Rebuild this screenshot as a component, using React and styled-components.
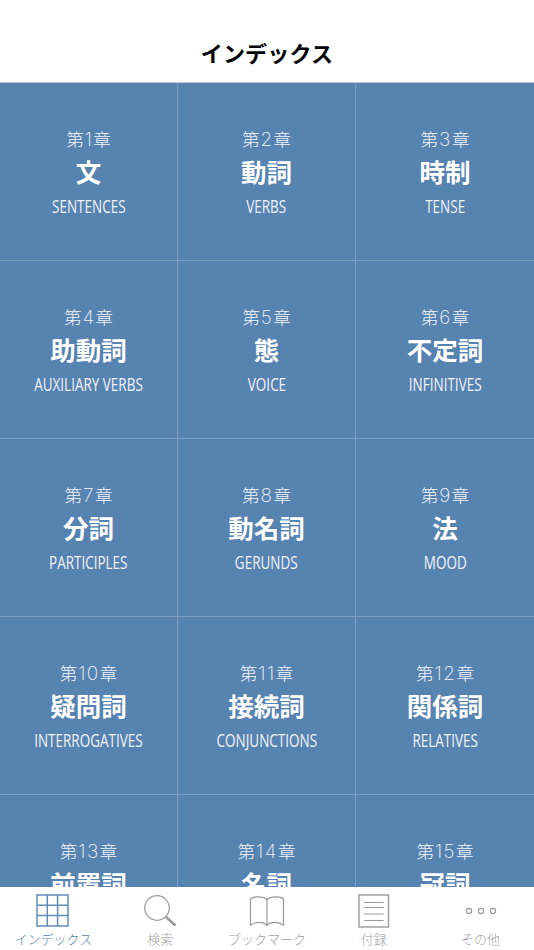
import React from "react";
import styled, { createGlobalStyle } from "styled-components";

const Global = createGlobalStyle`
  html, body { margin: 0; padding: 0; background: #fff; }
  * { box-sizing: border-box; }
`;
const JP = `"Noto Sans CJK JP", "Noto Sans", sans-serif`;

const Page = styled.div`
  width: 534px; height: 950px; display: flex; flex-direction: column; overflow: hidden;
  font-family: ${JP}; background: #fff;
`;
const Header = styled.header`
  height: 83px; flex: none; display: flex; align-items: flex-end; justify-content: center;
  padding-bottom: 15px; border-bottom: 1px solid #c4c8cc;
`;
const Title = styled.h1`
  margin: 0; font-size: 22px; line-height: 30px; font-weight: 700; color: #000; letter-spacing: 0.2px;
`;
const Grid = styled.main`
  flex: 1; min-height: 0; overflow: hidden; display: grid; grid-template-columns: repeat(3, 178px);
  grid-auto-rows: 178px; background: #5783b1;
`;
const Cell = styled.div`
  display: flex; flex-direction: column; align-items: center; padding-top: 44px; color: #fff;
  border-right: ${p => (p.$last ? "none" : "1px solid #7b9dc1")};
  border-bottom: 1px solid #7b9dc1;
`;
const Chapter = styled.div`
  display: flex; align-items: baseline; font-size: 17.5px; line-height: 24px; font-weight: 300; color: #f0f4f8; white-space: nowrap;
`;
const Digits = styled.span`
  font-family: "Inter", sans-serif; font-weight: 200; font-size: 19px; letter-spacing: 1.5px; padding-left: 1px;
`;
const Name = styled.div`
  margin-top: 2px; font-size: 25.5px; line-height: 34px; font-weight: 700; white-space: nowrap;
`;
const English = styled.div`
  margin-top: 6px; font-family: "Open Sans", sans-serif; font-weight: 400; font-size: 19px; line-height: 24px;
  color: #f0f4f8; white-space: nowrap; transform: scaleX(0.71); transform-origin: center;
`;
const TabBar = styled.nav`
  height: 63px; flex: none; display: grid; grid-template-columns: repeat(5, 1fr); background: #fff;
`;
const Tab = styled.div`
  display: flex; flex-direction: column; align-items: center; color: ${p => (p.$active ? "#5783b1" : "#a3a3a3")};
`;
const IconBox = styled.div`
  height: 44px; display: flex; align-items: center; justify-content: center; padding-top: 4px;
`;
const TabLabel = styled.span`
  font-size: 13px; line-height: 16px; white-space: nowrap; font-weight: 300;
`;

const GridIcon = () => (
  <svg width="34" height="34" viewBox="0 0 34 34" fill="none" stroke="#5f8cba" strokeWidth="1.5">
    <rect x="1" y="1" width="31" height="31" />
    <path d="M11.3 1v31M21.6 1v31M1 11.3h31M1 21.6h31" />
  </svg>
);
const SearchIcon = () => (
  <svg width="34" height="34" viewBox="0 0 34 34" fill="none" stroke="#999">
    <circle cx="14" cy="14" r="12.3" strokeWidth="1.2" />
    <path d="M23 23l9.5 8.5" strokeWidth="2.6" />
  </svg>
);
const BookIcon = () => (
  <svg width="36" height="32" viewBox="0 0 36 32" fill="none" stroke="#999" strokeWidth="1.2">
    <path d="M18 5C16 1.5 5 0.5 1.5 4V30C6 27 14 26 18 30.5C22 26 30 27 34.5 30V4C31 0.5 20 1.5 18 5ZM18 5V30.5" />
  </svg>
);
const ListIcon = () => (
  <svg width="32" height="34" viewBox="0 0 32 34" fill="none" stroke="#999">
    <rect x="1" y="1" width="29.5" height="32" strokeWidth="1.4" />
    <path d="M6 8.5h19.5M6 13.5h19.5M6 20h19.5M6 26.5h19.5" strokeWidth="1" />
  </svg>
);
const MoreIcon = () => (
  <svg width="32" height="34" viewBox="0 0 32 34" fill="none" stroke="#999" strokeWidth="1.2">
    <circle cx="4" cy="17" r="2.6" />
    <circle cx="16" cy="17" r="2.6" />
    <circle cx="28" cy="17" r="2.6" />
  </svg>
);

const chapters = [
  [1, "文", "SENTENCES"], [2, "動詞", "VERBS"], [3, "時制", "TENSE"],
  [4, "助動詞", "AUXILIARY VERBS"], [5, "態", "VOICE"], [6, "不定詞", "INFINITIVES"],
  [7, "分詞", "PARTICIPLES"], [8, "動名詞", "GERUNDS"], [9, "法", "MOOD"],
  [10, "疑問詞", "INTERROGATIVES"], [11, "接続詞", "CONJUNCTIONS"], [12, "関係詞", "RELATIVES"],
  [13, "前置詞", "PREPOSITIONS"], [14, "名詞", "NOUNS"], [15, "冠詞", "ARTICLES"],
];
const tabs = [
  ["インデックス", GridIcon, true], ["検索", SearchIcon], ["ブックマーク", BookIcon],
  ["付録", ListIcon], ["その他", MoreIcon],
];

export default function App() {
  return (
    <Page>
      <Global />
      <Header><Title>インデックス</Title></Header>
      <Grid>
        {chapters.map(([c, n, e], i) => (
          <Cell key={c} $last={i % 3 === 2}>
            <Chapter>第<Digits>{c}</Digits>章</Chapter>
            <Name>{n}</Name>
            <English>{e}</English>
          </Cell>
        ))}
      </Grid>
      <TabBar>
        {tabs.map(([label, Icon, active]) => (
          <Tab key={label} $active={active}>
            <IconBox><Icon /></IconBox>
            <TabLabel>{label}</TabLabel>
          </Tab>
        ))}
      </TabBar>
    </Page>
  );
}
